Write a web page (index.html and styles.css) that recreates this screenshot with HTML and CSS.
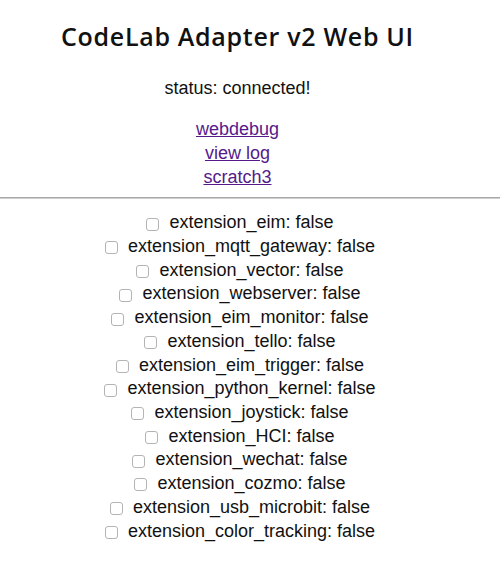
FILE: index.html
```html
<!DOCTYPE html>
<html lang="en">
<head>
<meta charset="utf-8">
<title>CodeLab Adapter v2 Web UI</title>
<link rel="stylesheet" href="styles.css">
</head>
<body>
<main class="page">
  <h1 class="title">CodeLab Adapter v2 Web UI</h1>
  <p class="status">status: connected!</p>
  <nav class="links">
    <a href="#">webdebug</a>
    <a href="#">view log</a>
    <a href="#">scratch3</a>
  </nav>
</main>
<hr class="divider">
<section class="extensions">
  <label class="ext"><input type="checkbox" class="box"><span>extension_eim: false</span></label>
  <label class="ext"><input type="checkbox" class="box"><span>extension_mqtt_gateway: false</span></label>
  <label class="ext"><input type="checkbox" class="box"><span>extension_vector: false</span></label>
  <label class="ext"><input type="checkbox" class="box"><span>extension_webserver: false</span></label>
  <label class="ext"><input type="checkbox" class="box"><span>extension_eim_monitor: false</span></label>
  <label class="ext"><input type="checkbox" class="box"><span>extension_tello: false</span></label>
  <label class="ext"><input type="checkbox" class="box"><span>extension_eim_trigger: false</span></label>
  <label class="ext"><input type="checkbox" class="box"><span>extension_python_kernel: false</span></label>
  <label class="ext"><input type="checkbox" class="box"><span>extension_joystick: false</span></label>
  <label class="ext"><input type="checkbox" class="box"><span>extension_HCI: false</span></label>
  <label class="ext"><input type="checkbox" class="box"><span>extension_wechat: false</span></label>
  <label class="ext"><input type="checkbox" class="box"><span>extension_cozmo: false</span></label>
  <label class="ext"><input type="checkbox" class="box"><span>extension_usb_microbit: false</span></label>
  <label class="ext"><input type="checkbox" class="box"><span>extension_color_tracking: false</span></label>
</section>
</body>
</html>
```

FILE: styles.css
```css
html, body {
  margin: 0;
  padding: 0;
  background: #ffffff;
}

body {
  font-family: "Liberation Sans", Arial, sans-serif;
  font-size: 18px;
  color: #111111;
}

.page {
  width: 475px;
  display: flex;
  flex-direction: column;
  align-items: center;
}

.title {
  margin: 19.5px 0 0;
  font-family: "Open Sans", "Liberation Sans", sans-serif;
  font-size: 25px;
  line-height: 32px;
  font-weight: 600;
  letter-spacing: 0.7px;
  color: #111111;
}

.status {
  margin: 24.3px 0 0;
  line-height: 24px;
}

.links {
  margin-top: 17.7px;
  display: flex;
  flex-direction: column;
  align-items: center;
}

.links a {
  line-height: 24px;
  color: #551a8b;
  text-decoration: underline;
}

.divider {
  margin: 7.5px 0 0;
  height: 0;
  border: 0;
  border-top: 1px solid #a8a8a8;
  border-bottom: 1px solid #cfcfcf;
}

.extensions {
  width: 475px;
  box-sizing: border-box;
  padding-left: 5px;
  margin-top: 12.4px;
  display: flex;
  flex-direction: column;
  align-items: center;
}

.ext {
  display: flex;
  align-items: center;
  gap: 10px;
  line-height: 23.7px;
}

.box {
  appearance: none;
  -webkit-appearance: none;
  width: 13px;
  height: 13px;
  margin: 2px 0 0;
  border: 1px solid #b4b4b4;
  border-radius: 3px;
  background: #ffffff;
  box-sizing: border-box;
}
```
